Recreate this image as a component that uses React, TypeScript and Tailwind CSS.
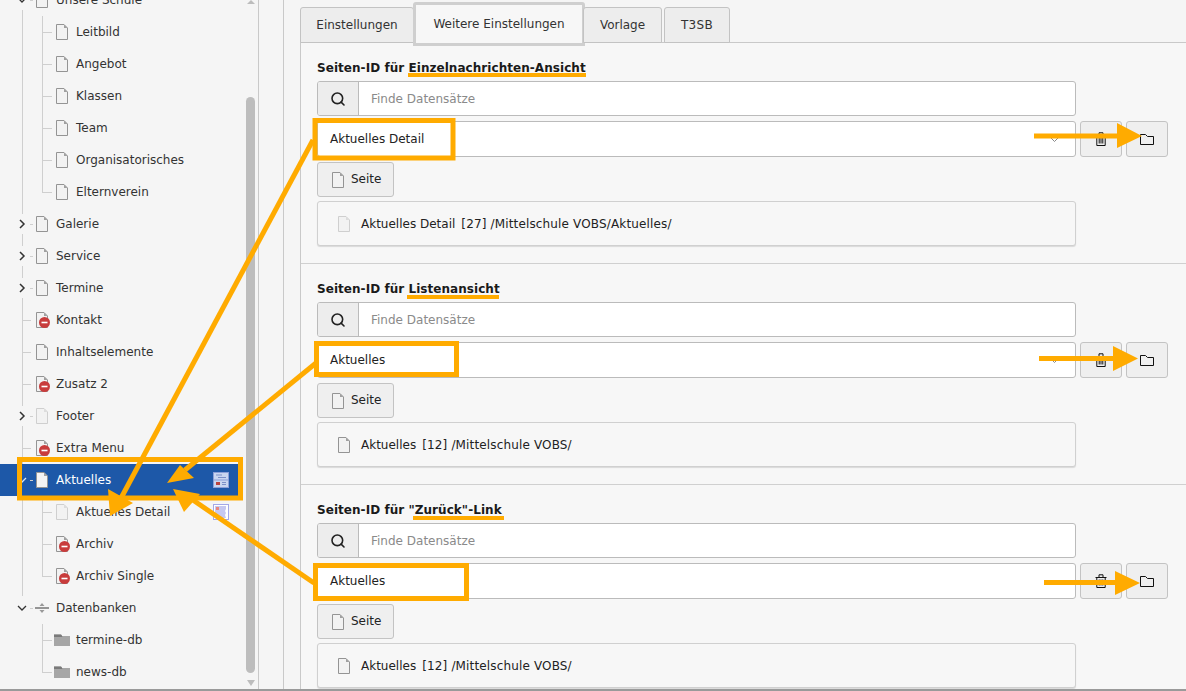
import { Search } from 'lucide-react'

type TreeRow = {
  label: string
  level: 1 | 2
  icon?: 'page' | 'faded' | 'hidden' | 'divider' | 'folder'
  toggle?: 'open' | 'closed'
  active?: boolean
  badge?: 'list' | 'detail'
  last?: boolean
}

const rows: TreeRow[] = [
  { label: 'Unsere Schule', level: 1, toggle: 'open' },
  { label: 'Leitbild', level: 2 },
  { label: 'Angebot', level: 2 },
  { label: 'Klassen', level: 2 },
  { label: 'Team', level: 2 },
  { label: 'Organisatorisches', level: 2 },
  { label: 'Elternverein', level: 2, last: true },
  { label: 'Galerie', level: 1, toggle: 'closed' },
  { label: 'Service', level: 1, toggle: 'closed' },
  { label: 'Termine', level: 1, toggle: 'closed' },
  { label: 'Kontakt', level: 1, icon: 'hidden' },
  { label: 'Inhaltselemente', level: 1 },
  { label: 'Zusatz 2', level: 1, icon: 'hidden' },
  { label: 'Footer', level: 1, toggle: 'closed', icon: 'faded' },
  { label: 'Extra Menu', level: 1, icon: 'hidden' },
  { label: 'Aktuelles', level: 1, toggle: 'open', active: true, badge: 'list' },
  { label: 'Aktuelles Detail', level: 2, icon: 'faded', badge: 'detail' },
  { label: 'Archiv', level: 2, icon: 'hidden' },
  { label: 'Archiv Single', level: 2, icon: 'hidden', last: true },
  { label: 'Datenbanken', level: 1, toggle: 'open', icon: 'divider' },
  { label: 'termine-db', level: 2, icon: 'folder' },
  { label: 'news-db', level: 2, icon: 'folder', last: true },
]

const sections = [
  { before: 'Seiten-ID für ', title: 'Einzelnachrichten-Ansicht', value: 'Aktuelles Detail', id: 27, path: '/Mittelschule VOBS/Aktuelles/', faded: true },
  { before: 'Seiten-ID für ', title: 'Listenansicht', value: 'Aktuelles', id: 12, path: '/Mittelschule VOBS/', faded: false },
  { before: 'Seiten-ID für ', title: '"Zurück"-Link', value: 'Aktuelles', id: 12, path: '/Mittelschule VOBS/', faded: false },
]

function PageIcon({ faded, fill = '#f2f2f2' }: { faded?: boolean; fill?: string }) {
  return (
    <svg width="12" height="16" viewBox="0 0 12 16" className="shrink-0">
      <path d="M.5.5h7.5l3.5 3.5v11.5H.5z" fill={fill} stroke={faded ? '#cfcfcf' : '#949494'} />
      <path d="M8 .5V4h3.5z" fill={faded ? '#dcdcdc' : '#a0a0a0'} />
    </svg>
  )
}

function TreeIcon({ icon = 'page', active }: { icon?: TreeRow['icon']; active?: boolean }) {
  if (icon === 'folder') {
    return (
      <svg width="16" height="12" viewBox="0 0 16 12" className="shrink-0">
        <path d="M0 0h7l1 2h8v10H0z" fill="#a6a6a6" />
        <path d="M0 1h7.5l1 2H0z" fill="#7a7a7a" />
      </svg>
    )
  }
  if (icon === 'divider') {
    return (
      <svg width="16" height="12" viewBox="0 0 16 12" className="shrink-0">
        <path d="M1 6h14" stroke="#555" strokeWidth="1.2" />
        <path d="M8 1l2.5 3h-5zM8 11l2.5-3h-5z" fill="#999" />
      </svg>
    )
  }
  if (icon === 'hidden') {
    return (
      <span className="relative block h-4 w-3 shrink-0">
        <PageIcon />
        <svg width="11" height="11" viewBox="0 0 11 11" className="absolute -right-[2px] top-[5px]">
          <circle cx="5.5" cy="5.5" r="5.5" fill="#c83c3c" />
          <path d="M2.5 5.5h6" stroke="#fff" strokeWidth="1.6" />
        </svg>
      </span>
    )
  }
  return <PageIcon faded={icon === 'faded'} fill={active ? '#f4f4f4' : '#f2f2f2'} />
}

function Toggle({ type, active }: { type: 'open' | 'closed'; active?: boolean }) {
  return (
    <svg width="10" height="10" viewBox="0 0 10 10" className="absolute left-[17px] top-[11px]">
      {type === 'open' ? (
        <path d="M1 3l4 4 4-4" fill="none" stroke={active ? '#dbe6f5' : '#333'} strokeWidth="1.3" />
      ) : (
        <path d="M3 1l4 4-4 4" fill="none" stroke="#333" strokeWidth="1.5" />
      )}
    </svg>
  )
}

function Badge({ type }: { type: 'list' | 'detail' }) {
  if (type === 'list') {
    return (
      <svg width="16" height="16" viewBox="0 0 16 16" className="absolute left-[213px] top-[8px]">
        <rect x=".5" y=".5" width="15" height="15" fill="#c9d6f0" stroke="#8b9fd8" />
        <path d="M0 8h16" stroke="#8b9fd8" />
        <path d="M3 3h6M5 5.5h8M9 10.5h4M9 12.5h4" stroke="#7b90c8" />
        <rect x="3" y="10" width="4" height="3" fill="#b8433f" />
      </svg>
    )
  }
  return (
    <svg width="16" height="16" viewBox="0 0 16 16" className="absolute left-[213px] top-[8px]">
      <rect x=".5" y=".5" width="15" height="15" fill="#fff" stroke="#a3a8e8" />
      <path d="M2 2h11v3l-1 2 1 2-1 2 1 3H2z" fill="#c6c8f0" />
      <rect x="3" y="3" width="3" height="3" fill="#e8877f" />
    </svg>
  )
}

function Tree() {
  return (
    <div className="-mt-[16px] w-[241px]">
      {rows.map((row, i) => {
        const wide = row.icon === 'folder' || row.icon === 'divider'
        return (
          <div
            key={row.label}
            className={`relative h-8 text-[12px] ${row.active ? 'bg-[#1d58a8] text-white' : 'text-[#333]'}`}
          >
            {/* tree guides */}
            {i < 19 && !row.active && <span className="absolute left-[22px] top-0 h-8 w-px bg-[#cfcfcf]" />}
            {i === 19 && <span className="absolute left-[22px] top-0 h-[4px] w-px bg-[#cfcfcf]" />}
            {row.level === 1 && !row.toggle && (
              <span className="absolute left-[22px] top-4 h-px w-[9px] bg-[#cfcfcf]" />
            )}
            {row.level === 1 && row.toggle && (
              <span className="absolute left-[30px] top-4 h-px w-[3px] bg-[#cfcfcf]" />
            )}
            {row.level === 2 && (
              <>
                <span className={`absolute left-[42px] top-0 w-px bg-[#cfcfcf] ${row.last ? 'h-4' : 'h-8'}`} />
                <span className="absolute left-[42px] top-4 h-px w-[10px] bg-[#cfcfcf]" />
              </>
            )}
            {row.toggle && (
              <>
                {!row.active && <span className="absolute left-[17px] top-[6px] h-5 w-[10px] bg-[#f5f5f5]" />}
                <Toggle type={row.toggle} active={row.active} />
              </>
            )}
            <div className={`flex h-8 items-center gap-2 ${row.level === 1 ? 'pl-9' : 'pl-14'}`}>
              <span className={`flex justify-center ${wide ? '-ml-[2px] w-4' : 'w-3'}`}>
                <TreeIcon icon={row.icon} active={row.active} />
              </span>
              <span className={wide ? '-ml-[2px]' : ''}>{row.label}</span>
            </div>
            {row.badge && <Badge type={row.badge} />}
          </div>
        )
      })}
    </div>
  )
}

function Sidebar() {
  return (
    <aside className="relative h-full w-[259px] shrink-0 overflow-hidden border-r border-[#c9c9c9] bg-[#f5f5f5]">
      <Tree />
      {/* scrollbar */}
      <div className="absolute right-[3px] top-0 flex h-full w-[9px] flex-col items-center">
        <span className="h-0 w-0 border-x-[4px] border-b-[4px] border-x-transparent border-b-[#bdbdbd]" />
        <span className="mt-[93px] h-[576px] w-[9px] rounded-[5px] bg-[#bdbdbd]" />
        <span className="mt-[7px] h-0 w-0 border-x-[4px] border-t-[6px] border-x-transparent border-t-[#bdbdbd]" />
      </div>
    </aside>
  )
}

function Tabs() {
  return (
    <div className="relative z-10 flex h-[35px] items-end pl-[16px]">
      <div className="-mb-px flex h-[36px] w-[114px] items-center justify-center rounded-t-[3px] border border-[#c3c3c3] bg-[#ededed]">Einstellungen</div>
      <div className="-mb-[4px] -ml-px flex h-[44px] w-[172px] items-center justify-center rounded-t-[3px] border-[3px] border-[#cfcfcf] bg-[#f7f7f7] pb-px">Weitere Einstellungen</div>
      <div className="-mb-px -ml-[2px] flex h-[36px] w-[79px] items-center justify-center rounded-t-[3px] border border-[#c3c3c3] bg-[#ededed]">Vorlage</div>
      <div className="-mb-px ml-[2px] flex h-[36px] w-[66px] items-center justify-center rounded-t-[3px] border border-[#c3c3c3] bg-[#ededed] tracking-[0.3px]">T3SB</div>
    </div>
  )
}

function FolderGlyph() {
  return (
    <svg width="14" height="11" viewBox="0 0 14 11">
      <path d="M.5.5h5l2 2h6v8H.5z" fill="none" stroke="#111" />
    </svg>
  )
}

function TrashGlyph() {
  return (
    <svg width="12" height="14" viewBox="0 0 12 14">
      <path d="M.5 3.5h11M1.8 3.5v10h8.4v-10M4 3.5V.8h4v2.7M4.2 5.5v6M6 5.5v6M7.8 5.5v6" fill="none" stroke="#111" />
    </svg>
  )
}

function Section({ section }: { section: (typeof sections)[number] }) {
  return (
    <section className="h-[221px] border-b border-[#d0d0d0] px-[16px] pt-[17px] last:border-b-0">
      <h3 className="h-[16px] text-[12px] leading-[16px] font-bold tracking-[0.05px] text-[#1a1a1a]">
        {section.before}
        {section.title}
      </h3>
      <div className="mt-[5px] flex h-[35px] w-[759px] overflow-hidden rounded-[3px] border border-[#bbb] bg-white">
        <span className="flex w-[41px] items-center justify-center border-r border-[#bbb] bg-[#ededed]">
          <Search size={16} strokeWidth={2.4} color="#222" />
        </span>
        <span className="flex items-center pl-[12px] text-[#8a8a8a]">Finde Datensätze</span>
      </div>
      <div className="mt-[5px] flex gap-[4px]">
        <div className="relative flex h-[36px] w-[759px] items-center rounded-[3px] border border-[#bbb] bg-white pl-[12px] text-[#222]">
          {section.value}
          <svg width="9" height="6" viewBox="0 0 9 6" className="absolute right-[16px] top-[15px]">
            <path d="M1 1l3.5 3.5L8 1" fill="none" stroke="#888" />
          </svg>
        </div>
        <button className="flex h-[36px] w-[42px] items-center justify-center rounded-[3px] border border-[#c3c3c3] bg-[#efefef]">
          <TrashGlyph />
        </button>
        <button className="flex h-[36px] w-[42px] items-center justify-center rounded-[3px] border border-[#c3c3c3] bg-[#efefef]">
          <FolderGlyph />
        </button>
      </div>
      <button className="mt-[5px] flex h-[35px] w-[77px] items-center gap-[7px] rounded-[3px] border border-[#c3c3c3] bg-[#efefef] pl-[14px] text-[#222]">
        <PageIcon />
        <span className="-mt-[2px]">Seite</span>
      </button>
      <div className="mt-[4px] flex h-[45px] w-[759px] items-center gap-[11px] rounded-[3px] border border-[#d0d0d0] bg-[#f7f7f7] pl-[20px] text-[#222] shadow-[0_1px_1px_rgba(0,0,0,0.12)]">
        <PageIcon faded={section.faded} />
        <span>
          {section.value}
          <span className="ml-[6px] tracking-[0.15px]">[{section.id}] {section.path}</span>
        </span>
      </div>
    </section>
  )
}

function Annotations() {
  const c = '#ffab00'
  return (
    <svg width="1186" height="691" viewBox="0 0 1186 691" className="pointer-events-none absolute left-0 top-0 z-20">
      <g fill="none" stroke={c} strokeWidth="5">
        <rect x="19.5" y="459.5" width="221" height="38.5" />
        <rect x="315" y="120.5" width="138" height="37.5" />
        <rect x="316.5" y="343.5" width="140" height="31" />
        <rect x="315.5" y="565.5" width="151" height="33" />
        <path d="M313 140 120 500" />
        <path d="M316 363 185 470" />
        <path d="M314 583 190 498" />
        <path d="M1034 136h90M1039 358.5h80M1044 582.5h80" />
      </g>
      <g fill={c}>
        <path d="M408 73h178v4H408zM407 295h92v4h-92zM413 516h91v4h-91z" />
        <path d="M110 516l-2-27 25 14z" />
        <path d="M167 483l13-18 14 13z" />
        <path d="M173 489l27 5-16 18z" />
        <path d="M1117 123l25 13-25 12zM1113 346l25 12.5-25 12.5zM1115 571l25 12-25 12z" />
      </g>
    </svg>
  )
}

export default function App() {
  return (
    <div className="relative flex h-[691px] w-[1186px] overflow-hidden border-b-2 border-[#9a9a9a] bg-[#f5f5f5] font-['DejaVu_Sans',sans-serif] text-[12px]">
      <Sidebar />
      <div className="h-full w-[25px] shrink-0 border-r border-[#c9c9c9]" />
      <main className="min-w-0 flex-1 pt-[7px] text-[#333]">
        <Tabs />
        <div className="ml-[16px] border-l border-t border-[#c9c9c9] bg-[#f7f7f7]">
          {sections.map((s) => (
            <Section key={s.title} section={s} />
          ))}
        </div>
      </main>
      <Annotations />
    </div>
  )
}
